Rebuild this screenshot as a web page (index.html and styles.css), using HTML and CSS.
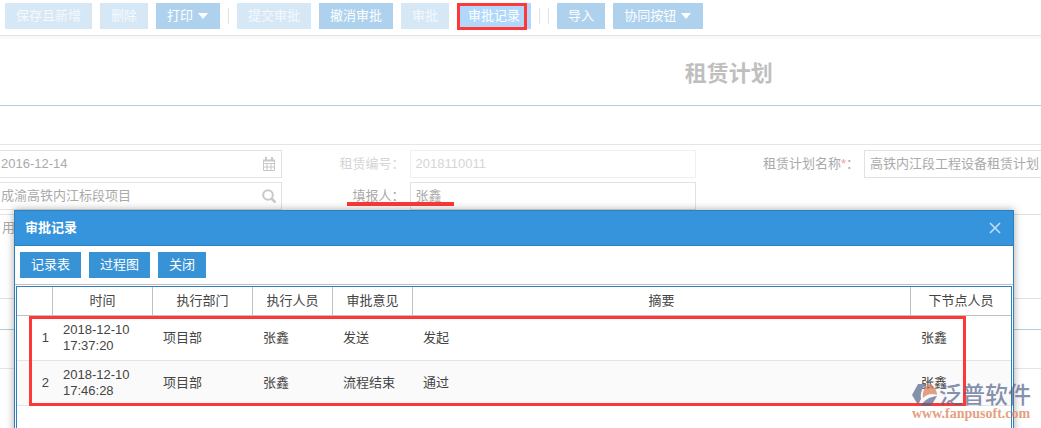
FILE: index.html
```html
<!DOCTYPE html>
<html lang="zh-CN">
<head>
    <meta charset="UTF-8">
    <meta name="viewport" content="width=device-width, initial-scale=1.0">
    <title>租赁计划</title>
    <link rel="stylesheet" href="styles.css">
</head>
<body>
    <div class="toolbar">
        <button type="button" class="btn" disabled>保存且新增</button>
        <button type="button" class="btn" disabled>删除</button>
        <button type="button" class="btn">打印<span class="caret"></span></button>
        <span class="sep"></span>
        <button type="button" class="btn" disabled>提交审批</button>
        <button type="button" class="btn">撤消审批</button>
        <button type="button" class="btn" disabled>审批</button>
        <button type="button" class="btn active">审批记录<span class="mark mark-btn"></span></button>
        <span class="sep"></span>
        <span class="sep"></span>
        <button type="button" class="btn">导入</button>
        <button type="button" class="btn">协同按钮<span class="caret"></span></button>
    </div>

    <div class="page">
        <form class="sheet">
            <h1>租赁计划</h1>
            <div class="section-bar"></div>
            <div class="fields">
                <div class="field">
                    <input type="text" aria-label="日期" value="2016-12-14">
                    <svg class="icon" viewBox="0 0 14 14" fill="none" stroke="#c8c8c8">
                        <path d="M1.5 3.5h11v10h-11z M1.5 6.5h11 M1.5 10h11 M5 6v7 M9 6v7"/>
                        <path d="M1 3.5h12" stroke-width="2"/>
                        <path d="M4 0v4 M10 0v4" stroke-width="2"/>
                    </svg>
                </div>
                <label class="off" for="code">租赁编号：</label>
                <div class="field off"><input type="text" id="code" value="2018110011" disabled></div>
                <label for="planName">租赁计划名称<span class="req">*</span>：</label>
                <div class="field"><input type="text" id="planName" value="高铁内江段工程设备租赁计划"></div>

                <div class="field">
                    <input type="text" aria-label="项目" value="成渝高铁内江标段项目">
                    <svg class="icon" viewBox="0 0 14 14" fill="none" stroke="#c8c8c8" stroke-width="2">
                        <circle cx="6" cy="6" r="4.8"/>
                        <path d="M9.5 9.5l4 4" stroke-width="2.6"/>
                    </svg>
                </div>
                <label for="reporter">填报人：</label>
                <div class="field marked"><input type="text" id="reporter" value="张鑫"><span class="mark-line"></span></div>

                <textarea class="usage" aria-label="用途">用</textarea>
            </div>
            <div class="section-line"></div>
            <div class="section-row"></div>
        </form>
    </div>

    <div class="dialog" role="dialog" aria-labelledby="dialogTitle">
        <div class="dialog-head">
            <h2 id="dialogTitle">审批记录</h2>
            <button type="button" class="close" aria-label="关闭">
                <svg viewBox="0 0 12 12" fill="none" stroke="#c3dff4" stroke-width="1.6"><path d="M1 1l10 10M11 1L1 11"/></svg>
            </button>
        </div>
        <div class="dialog-tools">
            <button type="button" class="btn solid">记录表</button>
            <button type="button" class="btn solid">过程图</button>
            <button type="button" class="btn solid">关闭</button>
        </div>
        <div class="grid">
            <table>
                <colgroup>
                    <col class="c-num"><col class="c-wide"><col class="c-wide"><col class="c-mid"><col class="c-mid"><col><col class="c-last">
                </colgroup>
                <thead>
                    <tr><th></th><th>时间</th><th>执行部门</th><th>执行人员</th><th>审批意见</th><th>摘要</th><th>下节点人员</th></tr>
                </thead>
                <tbody>
                    <tr><td>1</td><td>2018-12-10 17:37:20</td><td>项目部</td><td>张鑫</td><td>发送</td><td>发起</td><td>张鑫</td></tr>
                    <tr><td>2</td><td>2018-12-10 17:46:28</td><td>项目部</td><td>张鑫</td><td>流程结束</td><td>通过</td><td>张鑫</td></tr>
                </tbody>
            </table>
            <span class="mark mark-rows"></span>
        </div>
    </div>

    <div class="watermark">
        <div class="brand">
            <svg viewBox="0 0 26 24">
                <path fill="#53648c" d="M6 1h9C10 4 8 10 9 16l-3 6L0 12z"/>
                <path fill="#d9794f" d="M11 15C10 8 13 3 18 1c4 2 7 6 7 11-5-2-10-1-14 3z"/>
                <path fill="#53648c" d="M9 23c3-6 8-9 16-10l-6 10z"/>
            </svg>
            <span>泛普软件</span>
        </div>
        <div class="url">www.fanpusoft.com</div>
    </div>
</body>
</html>
```

FILE: styles.css
```css
* { box-sizing: border-box; }
body { margin: 0; height: 100vh; overflow: hidden; position: relative; background: #fff; color: #444; font: 13px/16px "Liberation Sans", "Noto Sans CJK SC", sans-serif; }
button, input, textarea { font: inherit; color: inherit; }

/* top toolbar */
.toolbar { display: flex; align-items: center; gap: 8px; padding: 3px 5px 6px; border-bottom: 1px solid #e5e5e5; box-shadow: 0 3px 0 #fafafa; }
.btn { display: flex; align-items: center; gap: 5px; height: 26px; padding: 0 11px; border: 0; background: #aed2ed; color: #fff; white-space: nowrap; position: relative; cursor: pointer; }
.btn:disabled { background: #d6e8f6; color: #f4f9fd; }
.btn.active { background: #b1d8fa; }
.btn.solid { background: #3892d6; }
.caret { border: 5px solid transparent; border-top: 6px solid #fff; border-bottom: 0; margin-right: 1px; }
.sep { width: 1px; height: 16px; background: #e2e2e2; }

/* form, wider than the window */
.page { overflow: hidden; }
.sheet { width: 140vw; }
.sheet h1 { margin: 0; padding: 22px 0 16px; border-bottom: 1px solid #b1cbd9; color: #bfbfbf; font-size: 22px; line-height: 31px; text-align: center; }
.section-bar { height: 39px; border-bottom: 1px solid #e5e5e5; }
.fields { display: grid; grid-template-columns: 1fr 128px 1fr 168px 1fr; gap: 4px 0; width: 111vw; margin-left: -5px; padding-top: 5px; color: #aaa; }
.fields label { align-self: center; padding-right: 5px; text-align: right; }
.fields label.off, .field.off { color: #d5d5d5; }
.field { display: flex; align-items: center; height: 28px; padding: 0 5px; border: 1px solid #e2e2e2; }
.field.off { border-color: #f0f0f0; }
.field input { flex: 1; min-width: 0; padding: 0; border: 0; background: none; outline: 0; }
.icon { width: 14px; height: 14px; }
.req { color: #f99; }
.usage { grid-column: 1 / -1; height: 85px; padding: 5px 6px; border: 1px solid #e2e2e2; resize: none; outline: 0; }
.section-line { height: 31px; border-bottom: 1px solid #b1cbd9; }
.section-row { height: 39px; border-bottom: 1px solid #e5e5e5; }

/* red marks */
.mark { position: absolute; border: 3px solid #fd3838; pointer-events: none; }
.mark-btn { inset: 0 4px -1px 0; }
.mark-rows { top: 29px; left: 12px; right: 45px; height: 90px; }
.marked { position: relative; }
.mark-line { position: absolute; left: -64px; top: 19px; width: 107px; height: 4px; background: #fd3838; }

/* dialog */
.dialog { position: absolute; top: 210px; left: 14px; right: 27px; bottom: -20px; display: flex; flex-direction: column; border: 1px solid #2e80bc; background: #fff; box-shadow: 0 0 8px rgba(0,0,0,0.35); }
.dialog-head { display: flex; align-items: center; justify-content: space-between; height: 35px; padding: 0 12px 0 10px; background: #3594db; border-bottom: 1px solid #2e80bc; }
.dialog-head h2 { margin: 0; color: #fff; font-size: 13px; line-height: 16px; }
.close { display: flex; padding: 0; border: 0; background: none; cursor: pointer; }
.close svg { width: 12px; height: 12px; }
.dialog-tools { display: flex; gap: 8px; padding: 6px 5px; border-bottom: 1px solid #c0c0c0; }
.grid { position: relative; flex: 1; margin: 1px 1px 0; border: 1px solid #2e80bc; }
table { width: 100%; table-layout: fixed; border-collapse: separate; border-spacing: 0; }
th { height: 29px; padding: 0; border-right: 1px solid #c0c0c0; border-bottom: 1px solid #c0c0c0; font-weight: normal; }
th:last-child { border-right: 0; }
td { height: 45px; padding: 0 10px; border-bottom: 1px solid #e5e5e5; }
td:first-child { padding: 0 4px; text-align: right; }
tbody tr:nth-child(even) { background: #fafafa; }
.c-num { width: 36px; }
.c-wide, .c-last { width: 100px; }
.c-mid { width: 80px; }

/* watermark */
.watermark { position: absolute; right: 10px; bottom: 8px; opacity: 0.7; white-space: nowrap; }
.brand { display: flex; align-items: center; gap: 1px; color: #53648c; font-size: 23px; line-height: 26px; font-weight: 500; }
.brand svg { width: 26px; height: 24px; }
.url { color: #d9794f; font: bold 14px/12px "Liberation Serif", serif; }
```
